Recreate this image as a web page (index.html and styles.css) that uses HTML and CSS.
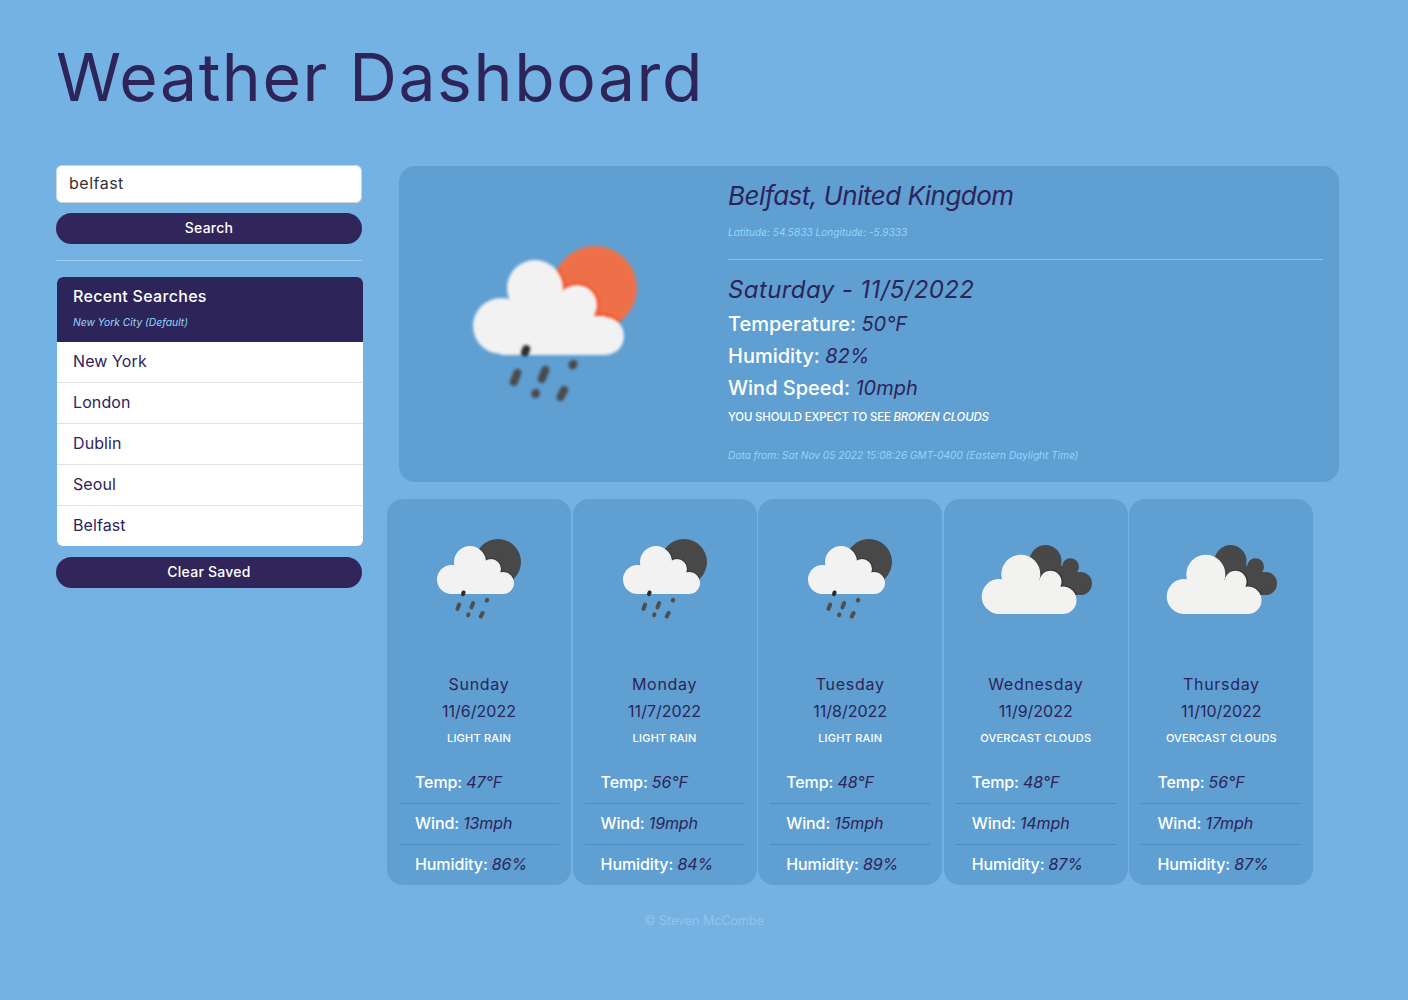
FILE: index.html
```html
<!DOCTYPE html>
<html lang="en">
<head>
<meta charset="utf-8">
<title>Weather Dashboard</title>
<link rel="stylesheet" href="styles.css">
</head>
<body>
<svg class="defs" width="0" height="0" aria-hidden="true">
  <defs>
    <clipPath id="sun-clip"><circle cx="69" cy="32" r="23"/></clipPath>
    <clipPath id="hero-sun-clip"><circle cx="69" cy="32" r="21"/></clipPath>
    <clipPath id="shade-clip"><rect x="40" y="20" width="70" height="45"/></clipPath>
    <g id="cloud-small">
      <circle cx="41" cy="32" r="16"/><circle cx="22.5" cy="49.5" r="14.5"/><circle cx="62" cy="39" r="10"/><circle cx="74" cy="53" r="11"/>
      <rect x="22" y="44" width="52" height="20"/>
      <rect x="30" y="38" width="36" height="10"/>
    </g>
    <g id="cloud-hero">
      <circle cx="39" cy="32" r="14"/><circle cx="22" cy="51" r="14"/><circle cx="60" cy="40.5" r="10"/><circle cx="74" cy="56" r="9.5"/>
      <rect x="22" y="46" width="52" height="19.5"/>
      <rect x="30" y="38" width="34" height="10"/>
    </g>
    <g id="rain" stroke-linecap="round" fill="none">
      <path d="M34.6 62.5 L34 64.2" stroke="#2b2b2b" stroke-width="4"/>
      <path d="M30.2 74.5 L28.4 79" stroke-width="4"/>
      <path d="M44.2 73 L42.4 77.5" stroke-width="4"/>
      <path d="M58.2 70 L57.8 70.6" stroke-width="4.2"/>
      <path d="M39.4 84.5 L39.2 85" stroke-width="4.2"/>
      <path d="M53.6 83 L51.8 86.5" stroke-width="4"/>
    </g>
    <symbol id="rain-night" viewBox="-10 0 120 100">
      <circle cx="69" cy="32" r="23" fill="#484848"/>
      <g clip-path="url(#sun-clip)"><use href="#cloud-small" fill="#333" stroke="#333" stroke-width="1.6"/></g>
      <use href="#cloud-small" fill="#f2f2f2"/>
      <use href="#rain" stroke="#4f4f4f"/>
    </symbol>
    <symbol id="rain-day" viewBox="0 0 100 100">
      <circle cx="69" cy="32" r="21" fill="#ee7049"/>
      <g clip-path="url(#hero-sun-clip)"><use href="#cloud-hero" fill="#f2562c" stroke="#f2562c" stroke-width="3"/></g>
      <use href="#cloud-hero" fill="#f2f2f2"/>
      <use href="#rain" stroke="#4a4a4a"/>
    </symbol>
    <symbol id="clouds" viewBox="-10 0 120 100">
      <g fill="#484848">
        <circle cx="59.5" cy="31" r="16"/><circle cx="84.5" cy="36.7" r="8.5"/><circle cx="94.5" cy="53.5" r="11.5"/>
        <path d="M50 20 L70 31 L76 36 L84 36 L92 42 L100 50 L94 65 L60 65 Z"/>
      </g>
      <g fill="#333" clip-path="url(#shade-clip)">
        <circle cx="65" cy="51.7" r="12"/><circle cx="77.4" cy="70.3" r="14.6"/>
      </g>
      <g fill="#f2f2f0">
        <circle cx="13.2" cy="66.5" r="17.5"/><circle cx="34.8" cy="44.3" r="19.5"/><circle cx="64.5" cy="51.7" r="11"/><circle cx="76.8" cy="70.3" r="13.7"/>
        <rect x="13" y="60" width="64" height="24"/>
        <rect x="36" y="50" width="32" height="14"/>
      </g>
    </symbol>
  </defs>
</svg>

<header class="page-head"><h1 class="title">Weather Dashboard</h1></header>

<main class="layout">
  <aside class="sidebar">
    <input class="search-input" type="text" value="belfast" aria-label="City">
    <button class="pill search-btn" type="button">Search</button>
    <hr class="side-rule">
    <section class="recent">
      <div class="recent-head">
        <div class="recent-title">Recent Searches</div>
        <div class="recent-sub">New York City (Default)</div>
      </div>
      <div class="recent-item">New York</div>
      <div class="recent-item">London</div>
      <div class="recent-item">Dublin</div>
      <div class="recent-item">Seoul</div>
      <div class="recent-item">Belfast</div>
    </section>
    <button class="pill clear-btn" type="button">Clear Saved</button>
  </aside>

  <div class="content">
    <section class="hero">
      <div class="hero-icon-col">
        <svg class="hero-icon"><use href="#rain-day"/></svg>
      </div>
      <div class="hero-info">
        <h2 class="city">Belfast, United Kingdom</h2>
        <div class="coords">Latitude: 54.5833 Longitude: -5.9333</div>
        <hr class="hero-rule">
        <h3 class="today">Saturday - 11/5/2022</h3>
        <div class="stat first">Temperature: <em>50°F</em></div>
        <div class="stat">Humidity: <em>82%</em></div>
        <div class="stat">Wind Speed: <em>10mph</em></div>
        <div class="expect">YOU SHOULD EXPECT TO SEE <em>BROKEN CLOUDS</em></div>
        <div class="data-from">Data from: Sat Nov 05 2022 15:08:26 GMT-0400 (Eastern Daylight Time)</div>
      </div>
    </section>

    <section class="cards">
      <article class="card">
        <svg class="card-icon"><use href="#rain-night"/></svg>
        <div class="day">Sunday</div><div class="date">11/6/2022</div><div class="desc">LIGHT RAIN</div>
        <div class="rows"><div class="row">Temp: <em>47°F</em></div><div class="row">Wind: <em>13mph</em></div><div class="row">Humidity: <em>86%</em></div></div>
      </article>
      <article class="card">
        <svg class="card-icon"><use href="#rain-night"/></svg>
        <div class="day">Monday</div><div class="date">11/7/2022</div><div class="desc">LIGHT RAIN</div>
        <div class="rows"><div class="row">Temp: <em>56°F</em></div><div class="row">Wind: <em>19mph</em></div><div class="row">Humidity: <em>84%</em></div></div>
      </article>
      <article class="card">
        <svg class="card-icon"><use href="#rain-night"/></svg>
        <div class="day">Tuesday</div><div class="date">11/8/2022</div><div class="desc">LIGHT RAIN</div>
        <div class="rows"><div class="row">Temp: <em>48°F</em></div><div class="row">Wind: <em>15mph</em></div><div class="row">Humidity: <em>89%</em></div></div>
      </article>
      <article class="card">
        <svg class="card-icon"><use href="#clouds"/></svg>
        <div class="day">Wednesday</div><div class="date">11/9/2022</div><div class="desc">OVERCAST CLOUDS</div>
        <div class="rows"><div class="row">Temp: <em>48°F</em></div><div class="row">Wind: <em>14mph</em></div><div class="row">Humidity: <em>87%</em></div></div>
      </article>
      <article class="card">
        <svg class="card-icon"><use href="#clouds"/></svg>
        <div class="day">Thursday</div><div class="date">11/10/2022</div><div class="desc">OVERCAST CLOUDS</div>
        <div class="rows"><div class="row">Temp: <em>56°F</em></div><div class="row">Wind: <em>17mph</em></div><div class="row">Humidity: <em>87%</em></div></div>
      </article>
    </section>
  </div>
</main>

<footer class="foot">© Steven McCombe</footer>
</body>
</html>
```
FILE: styles.css
```css
* { box-sizing: border-box; }
html, body { margin: 0; padding: 0; }
body {
  min-height: 1000px;
  background: #74b2e4;
  color: #2d2459;
  font-family: Inter, "Open Sans", "Liberation Sans", sans-serif;
  font-size: 16px;
  line-height: 24px;
}
.defs { position: absolute; }
em { font-style: italic; font-weight: 400; color: #2d2459; }

.page-head { padding: 29px 56px 40px; }
.title { margin: 0; font-size: 66px; line-height: 96px; font-weight: 400; letter-spacing: 1.6px; color: #2d2459; }

.layout { display: flex; align-items: flex-start; padding-left: 56px; gap: 25px; }

.sidebar { width: 306px; flex: none; }
.search-input {
  display: block; width: 100%; height: 38px; padding: 0 12px 2px;
  border: 1px solid #ced4da; border-radius: 6px; background: #fff;
  font: inherit; letter-spacing: .5px; color: #333;
}
.pill {
  display: block; width: 100%; height: 31px; padding: 0 0 2px; border: 0; border-radius: 16px;
  background: #31255a; color: #fff; font: 500 14px/29px Inter, sans-serif; letter-spacing: .25px; text-align: center;
}
.search-btn { margin-top: 10px; }
.clear-btn { margin-top: 11px; }
.side-rule { height: 1px; margin: 16px 0; border: 0; background: #a3cbed; }
.recent { width: 306px; margin-left: 1px; border-radius: 6px; overflow: hidden; background: #fff; }
.recent-head { height: 65px; padding: 7px 16px 0; background: #2d2459; color: #fff; }
.recent-title { font-weight: 500; line-height: 24px; letter-spacing: .3px; }
.recent-sub { margin-top: 6px; font-size: 10.3px; line-height: 16px; font-style: italic; color: #8fd8fa; }
.recent-item { height: 41px; padding: 7px 16px; line-height: 24px; letter-spacing: .1px; border-bottom: 1px solid #e2e2e2; color: #2d2459; }
.recent-item:last-child { height: 40px; border-bottom: 0; }

.content { width: 952px; flex: none; padding-top: 1px; }
.hero {
  display: flex; width: 940px; height: 316px; margin-left: 12px;
  border-radius: 16px; background: #5f9fd2;
}
.hero-icon-col { width: 316px; flex: none; display: flex; align-items: center; justify-content: center; }
.hero-icon { width: 200px; height: 200px; filter: blur(1.7px); }
.hero-info { flex: 1; padding: 13px 16px 0 13px; color: #fff; }
.city { margin: 0; font-size: 26px; line-height: 34px; font-weight: 400; font-style: italic; letter-spacing: -.52px; color: #2d2459; }
.coords { margin-top: 11px; font-size: 10px; line-height: 16px; font-style: italic; letter-spacing: .05px; color: #8fd8fa; }
.hero-rule { height: 1px; margin: 19px 0 15px; border: 0; background: #8cc0ea; }
.today { margin: 0; font-size: 24px; line-height: 30px; font-weight: 400; font-style: italic; letter-spacing: .4px; color: #2d2459; }
.stat { font-size: 20px; line-height: 32px; font-weight: 500; color: #fff; }
.stat.first { margin-top: 3px; }
.expect { margin-top: 5px; font-size: 11.4px; line-height: 16px; font-weight: 500; letter-spacing: -.15px; color: #fff; }
.expect em { font-weight: 500; color: #fff; }
.data-from { margin-top: 22px; font-size: 10.15px; line-height: 16px; font-style: italic; color: #8fd8fa; }

.cards { display: flex; gap: 1.6px; margin-top: 17px; }
.card {
  width: 184px; height: 386px; flex: none; padding-top: 31px; text-align: center;
  border-radius: 16px; background: #5f9fd2;
}
.card-icon { display: block; width: 120px; height: 100px; margin: 0 auto 41px; filter: blur(.35px); }
.day, .date { font-size: 16px; line-height: 27px; color: #2d2459; }
.day { letter-spacing: .7px; }
.desc { margin-top: 4px; font-size: 11px; line-height: 18px; font-weight: 500; letter-spacing: .2px; color: #fff; }
.rows { margin: 16px 12px 0; text-align: left; }
.row { height: 41px; padding: 7px 16px; font-size: 16px; line-height: 24px; font-weight: 500; letter-spacing: -.1px; color: #fff; border-bottom: 1px solid #4d8abf; }
.row:last-child { height: 40px; border-bottom: 0; }

.foot { margin-top: 24px; text-align: center; font-size: 12.5px; line-height: 24px; color: #93c2ea; }
```
